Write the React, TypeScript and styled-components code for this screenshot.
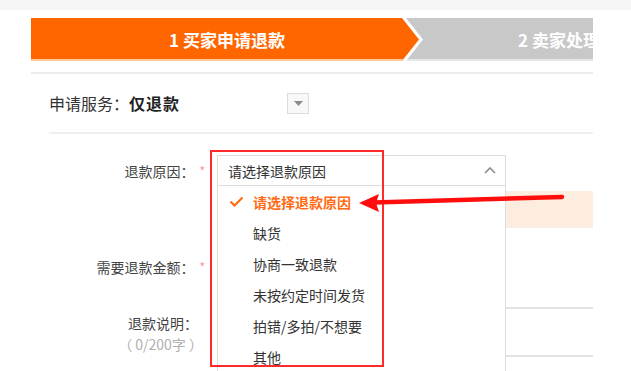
import styled, { createGlobalStyle } from "styled-components";

const GlobalStyle = createGlobalStyle`
  html, body {
    margin: 0;
    padding: 0;
    background: #fff;
  }
  body {
    font-family: "Microsoft YaHei", "Noto Sans CJK SC", "Noto Sans", sans-serif;
    color: #333;
  }
`;

const reasons = ["缺货", "协商一致退款", "未按约定时间发货", "拍错/多拍/不想要", "其他"];

const App = () => {
  return (
    <Page>
      <GlobalStyle />
      <TopBar />
      <Main>
        <Steps>
          <ActiveStep>
            <ActiveFill>1 买家申请退款</ActiveFill>
          </ActiveStep>
          <NextStep>2 卖家处理退款申请</NextStep>
        </Steps>
        <Divider />
        <ServiceRow>
          <span>申请服务：</span>
          <strong>仅退款</strong>
          <MiniSelect>
            <svg width="9" height="5" viewBox="0 0 9 5">
              <polygon points="0,0 9,0 4.5,5" fill="#8a8a8a" />
            </svg>
          </MiniSelect>
        </ServiceRow>
        <Form>
          <Row>
            <Label>
              退款原因：<Star>*</Star>
            </Label>
            <SelectWrap>
              <SelectBox>
                <span>请选择退款原因</span>
                <svg width="12" height="7" viewBox="0 0 12 7">
                  <polyline points="1,6 6,1 11,6" fill="none" stroke="#8c8c8c" strokeWidth="1.6" />
                </svg>
              </SelectBox>
              <Dropdown>
                <Option $active>
                  <Check width="15" height="11" viewBox="0 0 15 11">
                    <polyline points="1.5,5.5 5.5,9.5 13.5,1.5" fill="none" stroke="#ff6a13" strokeWidth="2.2" />
                  </Check>
                  请选择退款原因
                </Option>
                {reasons.map((r) => (
                  <Option key={r}>{r}</Option>
                ))}
              </Dropdown>
            </SelectWrap>
          </Row>
          <Notice />
          <AmountRow>
            <Label>
              需要退款金额：<Star>*</Star>
            </Label>
          </AmountRow>
          <ExplainRow>
            <ExplainLabel>
              <span>退款说明：</span>
              <Count>（ 0/200字 ）</Count>
            </ExplainLabel>
            <TextBox />
          </ExplainRow>
        </Form>
      </Main>
      <Annotation width="631" height="371" viewBox="0 0 631 371">
        <rect x="211" y="151" width="172" height="215" fill="none" stroke="#ff2b2b" strokeWidth="2" />
        <line x1="374" y1="202.5" x2="562" y2="197" stroke="#ff0d0d" strokeWidth="4.5" strokeLinecap="round" />
        <polygon points="359,203 379,194 376,203 379,212" fill="#ff0d0d" />
      </Annotation>
    </Page>
  );
};

const Page = styled.div`
  position: relative;
  width: 631px;
  height: 371px;
  overflow: hidden;
`;

const TopBar = styled.div`
  height: 10px;
  background: #f5f5f5;
`;

const Main = styled.div`
  width: 562px;
  margin-left: 31px;
  padding-top: 8px;
`;

const Steps = styled.div`
  display: flex;
  height: 43px;
  background: #c8c8c8;
  box-shadow: inset 0 -2px 0 #e6e6e6;
  overflow: hidden;
`;

const ActiveStep = styled.div`
  flex: 0 0 392px;
  background: #fff;
  clip-path: polygon(0 0, 375px 0, 392px 50%, 375px 100%, 0 100%);
`;

const ActiveFill = styled.div`
  width: 388px;
  height: 100%;
  display: flex;
  align-items: center;
  justify-content: center;
  padding-left: 4px;
  box-sizing: border-box;
  background: #ff6600;
  box-shadow: inset 0 -2px 0 #ffc79c;
  clip-path: polygon(0 0, 371px 0, 388px 50%, 371px 100%, 0 100%);
  color: #fff;
  font-size: 17px;
  font-weight: bold;
`;

const NextStep = styled.div`
  flex: 1;
  display: flex;
  align-items: center;
  padding-left: 95px;
  white-space: nowrap;
  color: #fff;
  font-size: 17px;
  font-weight: bold;
`;

const Divider = styled.div`
  height: 2px;
  margin-top: 11px;
  background: #ececec;
`;

const ServiceRow = styled.div`
  display: flex;
  align-items: center;
  height: 58px;
  margin-left: 18px;
  border-bottom: 2px solid #efefef;
  font-size: 16px;
  color: #333;

  strong {
    color: #222;
    letter-spacing: 1px;
  }
`;

const MiniSelect = styled.div`
  display: flex;
  align-items: center;
  justify-content: center;
  width: 20px;
  height: 19px;
  margin-left: 107px;
  border: 1px solid #dcdcdc;
  background: #f8f8f8;
`;

const Form = styled.div`
  padding-top: 21px;
`;

const Row = styled.div`
  display: flex;
  align-items: flex-start;
`;

const Label = styled.div`
  display: flex;
  align-items: center;
  justify-content: flex-end;
  width: 174px;
  height: 31px;
  margin-right: 12px;
  font-size: 14px;
  color: #444;
  white-space: nowrap;
`;

const Star = styled.span`
  margin-left: 5px;
  color: #ff8f8f;
  font-size: 12px;
`;

const SelectWrap = styled.div`
  position: relative;
  width: 289px;
  z-index: 2;
`;

const SelectBox = styled.div`
  display: flex;
  align-items: center;
  justify-content: space-between;
  height: 31px;
  padding: 0 9px 0 10px;
  box-sizing: border-box;
  border: 1px solid #dcdcdc;
  background: #fff;
  font-size: 14px;
  color: #333;
`;

const Dropdown = styled.ul`
  position: absolute;
  top: 31px;
  left: 0;
  width: 100%;
  height: 240px;
  margin: 0;
  padding: 0;
  list-style: none;
  box-sizing: border-box;
  border: 1px solid #dcdcdc;
  border-top: none;
  background: #fff;
`;

const Option = styled.li<{ $active?: boolean }>`
  position: relative;
  display: flex;
  align-items: center;
  height: 31px;
  padding-left: 35px;
  font-size: 14px;
  color: ${(p) => (p.$active ? "#ff6a13" : "#333")};
  font-weight: ${(p) => (p.$active ? "bold" : "normal")};
`;

const Check = styled.svg`
  position: absolute;
  left: 11px;
  top: 10px;
`;

const Notice = styled.div`
  height: 37px;
  margin-top: 5px;
  margin-left: 186px;
  background: #fdece0;
`;

const AmountRow = styled(Row)`
  margin-top: 23px;
`;

const ExplainRow = styled.div`
  display: flex;
  margin-top: 25px;
`;

const ExplainLabel = styled.div`
  display: flex;
  flex-direction: column;
  align-items: flex-end;
  width: 174px;
  margin-right: 12px;
  padding-top: 6px;
  padding-right: 7px;
  box-sizing: border-box;
  font-size: 14px;
  line-height: 20px;
  color: #444;

  span {
    white-space: nowrap;
  }
`;

const Count = styled.span`
  margin-top: 1px;
  margin-right: -5px;
  color: #b0b0b0;
`;

const TextBox = styled.div`
  flex: 1;
  height: 46px;
  border-top: 2px solid #e2e2e2;
  border-bottom: 2px solid #e2e2e2;
`;

const Annotation = styled.svg`
  position: absolute;
  left: 0;
  top: 0;
  z-index: 5;
  pointer-events: none;
`;

export default App;
